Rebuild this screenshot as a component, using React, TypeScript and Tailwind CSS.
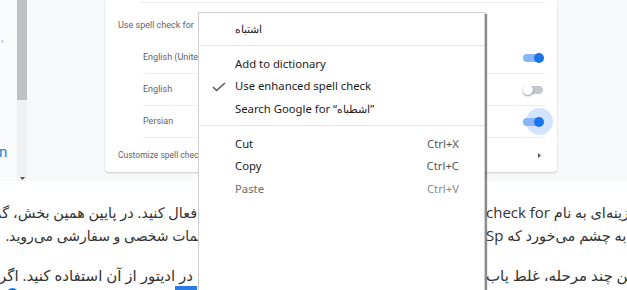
import type { ReactNode } from "react";

const Toggle = ({ on, focused }: { on: boolean; focused?: boolean }) => (
  <div className="relative w-[22px] h-[12px]">
    {focused && (
      <div className="absolute left-[2.5px] top-[-7.5px] w-[27px] h-[27px] rounded-full bg-[#d2e3fc]" />
    )}
    {on ? (
      <>
        <div className="absolute left-0 top-[2px] w-[18px] h-[8px] rounded-full bg-[#8ab4f8]" />
        <div className="absolute right-[1px] top-[1px] w-[10px] h-[10px] rounded-full bg-[#1a73e8]" />
      </>
    ) : (
      <>
        <div className="absolute left-[4px] top-[2px] w-[16px] h-[8px] rounded-full bg-[#c4c7cc]" />
        <div className="absolute left-0 top-[1px] w-[10px] h-[10px] rounded-full bg-white shadow-[0_1px_2px_rgba(0,0,0,0.45)]" />
      </>
    )}
  </div>
);

const langs = [
  { name: "English (United States)", on: true },
  { name: "English", on: false },
  { name: "Persian", on: true, focused: true },
];

const MenuItem = ({
  label,
  shortcut,
  disabled,
  checked,
}: {
  label: string;
  shortcut?: string;
  disabled?: boolean;
  checked?: boolean;
}) => (
  <div
    className={`flex items-center h-[22.5px] pr-[25px] ${
      disabled ? "text-[#6d6d6d]" : "text-[#1b1b1b]"
    }`}
  >
    <div className="w-[36px] flex items-center pl-[13px]">
      {checked && (
        <svg width="14" height="10" viewBox="0 0 14 10" fill="none">
          <path d="M1 5 L4.5 8.5 L13 1" stroke="#555" strokeWidth="1.4" />
        </svg>
      )}
    </div>
    <span className="flex-1">{label}</span>
    {shortcut && (
      <span className={disabled ? "text-[#8a8a8a]" : "text-[#555]"}>{shortcut}</span>
    )}
  </div>
);

const Sep = () => <div className="h-px bg-[#e3e3e3] mt-[4.5px] mb-[7px]" />;

// left column of the article, its right end runs under the menu
const LeftLine = ({ children, cls }: { children: ReactNode; cls: string }) => (
  <div className={`overflow-hidden flex justify-end shrink-0 ${cls}`}>
    <span dir="rtl" className="whitespace-nowrap shrink-0">
      {children}
    </span>
  </div>
);

const RightLine = ({ children }: { children: ReactNode }) => (
  <div className="flex-1 overflow-hidden flex justify-start pl-[1px]">
    <span dir="rtl" className="whitespace-nowrap shrink-0">
      {children}
    </span>
  </div>
);

export default function App() {
  return (
    <div className="relative w-[627px] h-[290px] overflow-hidden bg-white">
      {/* settings screenshot */}
      <div className="flex h-[181px] bg-[#f7f8fa] font-['Roboto',sans-serif]">
        <div className="w-[17px] bg-[#fafbfc] flex flex-col">
          <div className="mt-[38px] ml-[1px] text-[8px] text-[#777] leading-none">›</div>
          <div className="mt-[99px] ml-[-1px] text-[15px] leading-none text-[#1a86d4]">n</div>
        </div>
        <div className="w-[10px] flex flex-col bg-[#f1f1f1]">
          <div className="h-[100px] bg-[#c1c1c1]" />
          <div className="flex-1 flex flex-col justify-end items-center pb-[1px]">
            <svg width="5" height="3" viewBox="0 0 5 3">
              <path d="M0 0 H5 L2.5 3 Z" fill="#505050" />
            </svg>
          </div>
        </div>
        <div className="flex-1 flex items-start bg-[#f8f9fa]">
          <div className="ml-[78px] w-[452px] h-[172px] bg-white rounded-b-[4px] shadow-[0_1px_2px_rgba(60,64,67,0.25)] flex flex-col">
            <div className="mt-[2px] h-px ml-[35px] mr-[12px] bg-[#ececec]" />
            <div className="h-[39px] pt-[7px] pl-[13px] flex items-center text-[9px] text-[#5f6368]">
              Use spell check for
            </div>
            {langs.map((l) => (
              <div
                key={l.name}
                className="h-[32px] ml-[38px] mr-[12px] flex items-center justify-between border-b border-[#ececec] text-[9px] text-[#5f6368]"
              >
                <span>{l.name}</span>
                <Toggle on={l.on} focused={l.focused} />
              </div>
            ))}
            <div className="h-[34px] pl-[13px] pr-[16px] flex items-center justify-between text-[8.5px] text-[#5f6368]">
              <span>Customize spell check</span>
              <svg width="3" height="5" viewBox="0 0 3 5">
                <path d="M0 0 L3 2.5 L0 5 Z" fill="#555" />
              </svg>
            </div>
          </div>
        </div>
      </div>

      {/* article text */}
      <div className="text-[14.5px] leading-[23px] text-[#333] font-['Open_Sans','DejaVu_Sans',sans-serif]">
        <div className="mt-[19.5px] flex">
          <LeftLine cls="w-[212px]">را فعال کنید. در پایین همین بخش، گزینه</LeftLine>
          <div className="w-[273px] shrink-0" />
          <RightLine>
            گزینه‌ای به نام <span className="text-[15px]">check for</span>
          </RightLine>
        </div>
        <div className="flex">
          <LeftLine cls="w-[271px] text-[14px]">به بخش تنظیمات شخصی و سفارشی می‌روید.</LeftLine>
          <div className="w-[214px] shrink-0" />
          <RightLine>
            ای به چشم می‌خورد که <span className="text-[15px]">Sp</span>
          </RightLine>
        </div>
        <div className="mt-[17px] flex text-[15px]">
          <LeftLine cls="w-[193px]">در ادیتور از آن استفاده کنید. اگر نیاز</LeftLine>
          <div className="w-[292px] shrink-0" />
          <RightLine>در این چند مرحله، غلط یاب</RightLine>
        </div>
        <div className="flex items-start h-[4px]">
          <div className="ml-[7px] mt-[1px] w-[11px] h-[11px] rounded-full bg-[#1a73e8]" />
          <div className="ml-[157px] mt-[-1px] w-[22px] h-[10px] bg-[#2a7be4]" />
        </div>
      </div>

      {/* context menu */}
      <div className="absolute left-[198px] top-[12px] w-[287px] h-[290px] bg-white border border-[#cfcfcf] shadow-[2px_2px_1px_rgba(0,0,0,0.45)] pt-[5px] text-[11.3px] font-['Noto_Sans','Open_Sans',sans-serif]">
        <MenuItem label="اشتباه" />
        <Sep />
        <MenuItem label="Add to dictionary" />
        <MenuItem label="Use enhanced spell check" checked />
        <MenuItem label="Search Google for “اشطباه”" />
        <Sep />
        <MenuItem label="Cut" shortcut="Ctrl+X" />
        <MenuItem label="Copy" shortcut="Ctrl+C" />
        <MenuItem label="Paste" shortcut="Ctrl+V" disabled />
      </div>
    </div>
  );
}
